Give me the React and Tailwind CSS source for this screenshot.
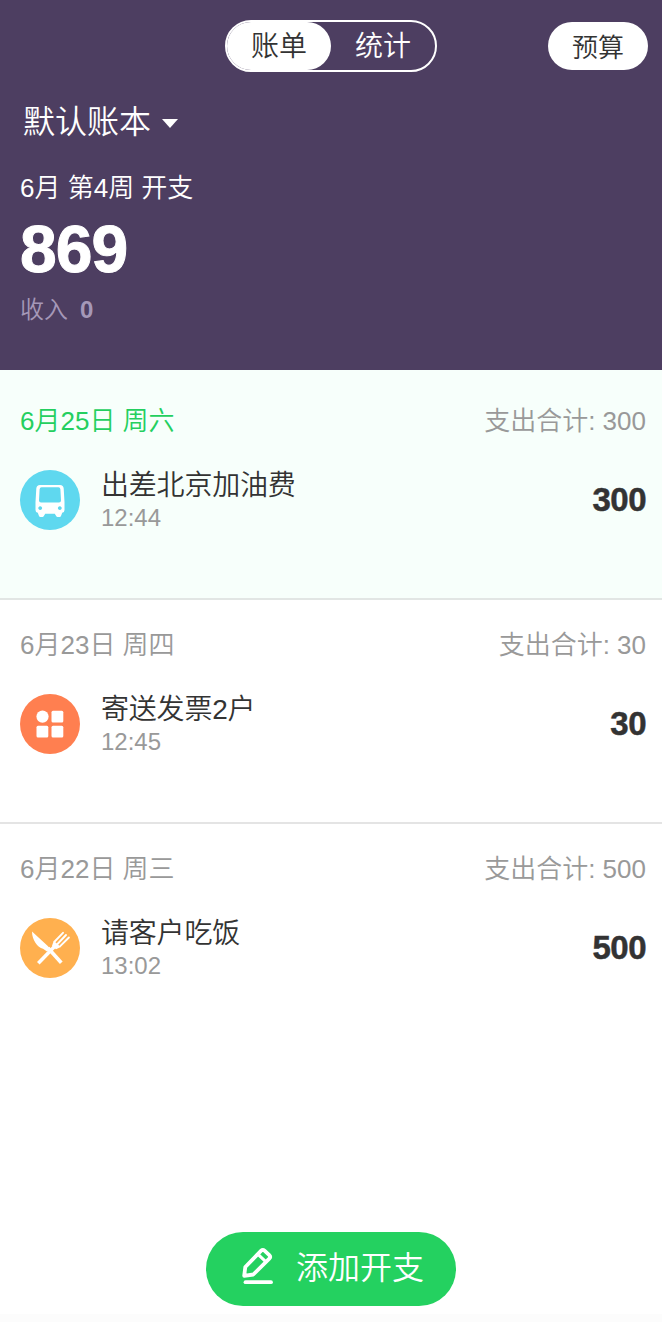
import React from 'react';

const BusIcon = () => (
  <svg viewBox="0 0 60 60" className="w-[60px] h-[60px]">
    <path
      fillRule="evenodd"
      fill="#fff"
      d="M20 15 H40 Q43.400 15 43.700 18.500 L44.500 32 V40 Q44.500 42.500 42.200 42.700 L41 46 Q40.600 47 39.600 47 H37.500 Q36.700 47 36.300 46.200 L34.800 43.800 H25.200 L23.700 46.200 Q23.300 47 22.500 47 H20.400 Q19.400 47 19 46 L17.800 42.700 Q15.500 42.500 15.500 40 V32 L16.300 18.500 Q16.600 15 20 15 Z M21.500 17.200 Q19.800 17.200 19.600 19.200 L19 30.500 Q19 32.600 21 32.600 H39 Q41 32.600 41 30.500 L40.400 19.200 Q40.200 17.200 38.500 17.200 Z M20.200 36.200 a1.900 1.900 0 1 0 0.010 0 Z M39.800 36.200 a1.900 1.900 0 1 0 0.010 0 Z"
    />
  </svg>
);

const GridIcon = () => (
  <svg viewBox="0 0 60 60" className="w-[60px] h-[60px]" fill="#fff">
    <circle cx="22.500" cy="22.600" r="6.100" />
    <rect x="31.500" y="16.800" width="11.800" height="11.800" rx="1.500" />
    <rect x="16.500" y="31.700" width="11.800" height="11.800" rx="1.500" />
    <rect x="31.500" y="31.700" width="11.800" height="11.800" rx="1.500" />
  </svg>
);

const FoodIcon = () => (
  <svg viewBox="0 0 60 60" className="w-[60px] h-[60px]" fill="none" stroke="#fff" strokeLinecap="round">
    <path d="M12 13.500 L27.500 27.800 L30.500 31 L27 33.500 L23 30.700 C17.500 29.500 12 22 12 13.500 Z" fill="#fff" stroke="none" />
    <path d="M28 30 L41.300 44.800" strokeWidth="3.600" strokeLinecap="butt" />
    <path d="M18.300 45.300 L35.500 27.500" strokeWidth="3.600" strokeLinecap="butt" />
    <path d="M32 28 L33.700 22.800 L40.800 29 L36 31.300 Z" fill="#fff" stroke="none" />
    <path d="M34.700 23.500 L43 14.800 M37.500 26 L46 17 M40.200 28.200 L48.900 19.500" strokeWidth="1.900" />
  </svg>
);

const PencilIcon = () => (
  <svg viewBox="0 0 36 40" className="-mt-1.5 w-9 h-10" fill="none" stroke="#fff" strokeWidth="3.800" strokeLinejoin="round" strokeLinecap="round">
    <path d="M5.200 29.800 L6.300 21 L22.200 4.700 Q23.800 3.100 25.500 4.700 L30.300 9.200 Q32 10.900 30.300 12.600 L14.300 28.500 Z" />
    <path d="M19.300 8.600 L26.200 15.200" strokeWidth="3" />
    <path d="M6.500 36.200 H32" strokeWidth="3.800" />
  </svg>
);

const days = [
  {
    date: '6月25日 周六',
    total: 300,
    active: true,
    items: [{ title: '出差北京加油费', time: '12:44', amount: 300, color: 'bg-[#5fd8ef]', icon: BusIcon }],
  },
  {
    date: '6月23日 周四',
    total: 30,
    items: [{ title: '寄送发票2户', time: '12:45', amount: 30, color: 'bg-[#ff7f50]', icon: GridIcon }],
  },
  {
    date: '6月22日 周三',
    total: 500,
    items: [{ title: '请客户吃饭', time: '13:02', amount: 500, color: 'bg-[#ffb04f]', icon: FoodIcon }],
  },
];

const Header = () => (
  <header className="h-[370px] bg-[#4d3e61] text-white px-5 pt-5">
    <div className="grid grid-cols-[1fr_212px_1fr] items-center -mr-1.5 -ml-1.5 h-[52px]">
      <span />
      <div className="flex h-[52px] rounded-full border-2 border-white text-[28px] leading-[44px]">
        <button className="w-[104px] pt-0.5 rounded-full bg-white text-[#333] font-[350]">账单</button>
        <button className="w-[104px] pt-0.5 font-[350]">统计</button>
      </div>
      <button className="justify-self-end w-[100px] h-12 pt-1 rounded-full bg-white text-[#333] text-[26px] font-[350]">
        预算
      </button>
    </div>

    {/* Ledger picker */}
    <button className="flex items-center mt-[26px] ml-[3px] h-12 text-[32px] leading-[48px] font-[350]">
      默认账本
      <svg viewBox="0 0 16 9" className="ml-[11px] mt-0.5 w-4 h-[9px]" fill="#fff">
        <path d="M0 0 H16 L8 9 Z" />
      </svg>
    </button>

    <p className="mt-[22px] h-10 text-[26px] leading-10 font-[350]">6月 第4周 开支</p>
    <p className="mt-[5px] h-[72px] text-[66px] leading-[73px] tracking-[-1px] font-bold [-webkit-text-stroke:1px]">869</p>
    <p className="mt-[7px] h-9 text-2xl leading-9 text-[#a598b8] font-[350]">
      收入<span className="ml-3 font-bold">0</span>
    </p>
  </header>
);

const DaySection = ({ day }) => (
  <section className={day.active ? 'h-[230px] px-5 pr-4 pt-[31px] bg-[#f7fffb] border-b-2 border-[#e2e6e4]' : 'h-56 px-5 pr-4 pt-[25px] border-b-2 border-[#e4e4e4] last:border-b-0'}>
    <div className="flex justify-between h-10 text-[26px] leading-10 font-[350] text-[#999]">
      <span className={day.active ? 'text-[#24cf5f]' : ''}>{day.date}</span>
      <span>支出合计: {day.total}</span>
    </div>
    {day.items.map((item) => (
      <div key={item.title} className="flex items-center mt-[29px] h-[60px]">
        <div className={`w-[60px] h-[60px] rounded-full ${item.color}`}>
          <item.icon />
        </div>
        <div className="ml-[21px] flex-1">
          <p className="h-9 text-[28px] leading-9 tracking-[-0.2px] font-[350] text-[#333]">{item.title}</p>
          <p className="h-7 text-2xl leading-7 text-[#999]">{item.time}</p>
        </div>
        <span className="text-[33px] tracking-[-0.5px] font-bold text-[#333] [-webkit-text-stroke:0.5px]">{item.amount}</span>
      </div>
    ))}
  </section>
);

const App = () => {
  return (
    <div className="flex flex-col w-full h-[1322px] overflow-hidden bg-white font-['Liberation_Sans','Noto_Sans_CJK_SC',sans-serif]">
      <Header />
      <main className="flex-1">
        {days.map((day) => (
          <DaySection key={day.date} day={day} />
        ))}
      </main>
      <footer className="flex flex-col items-center">
        <button className="flex items-center w-[250px] h-[74px] pl-[33px] rounded-full bg-[#24d160] text-white text-[32px] font-[350]">
          <PencilIcon />
          <span className="ml-[21px] -mt-[3px]">添加开支</span>
        </button>
        <div className="mt-2 w-full h-2 bg-[#fcfcfc]" />
      </footer>
    </div>
  );
};

export default App;
